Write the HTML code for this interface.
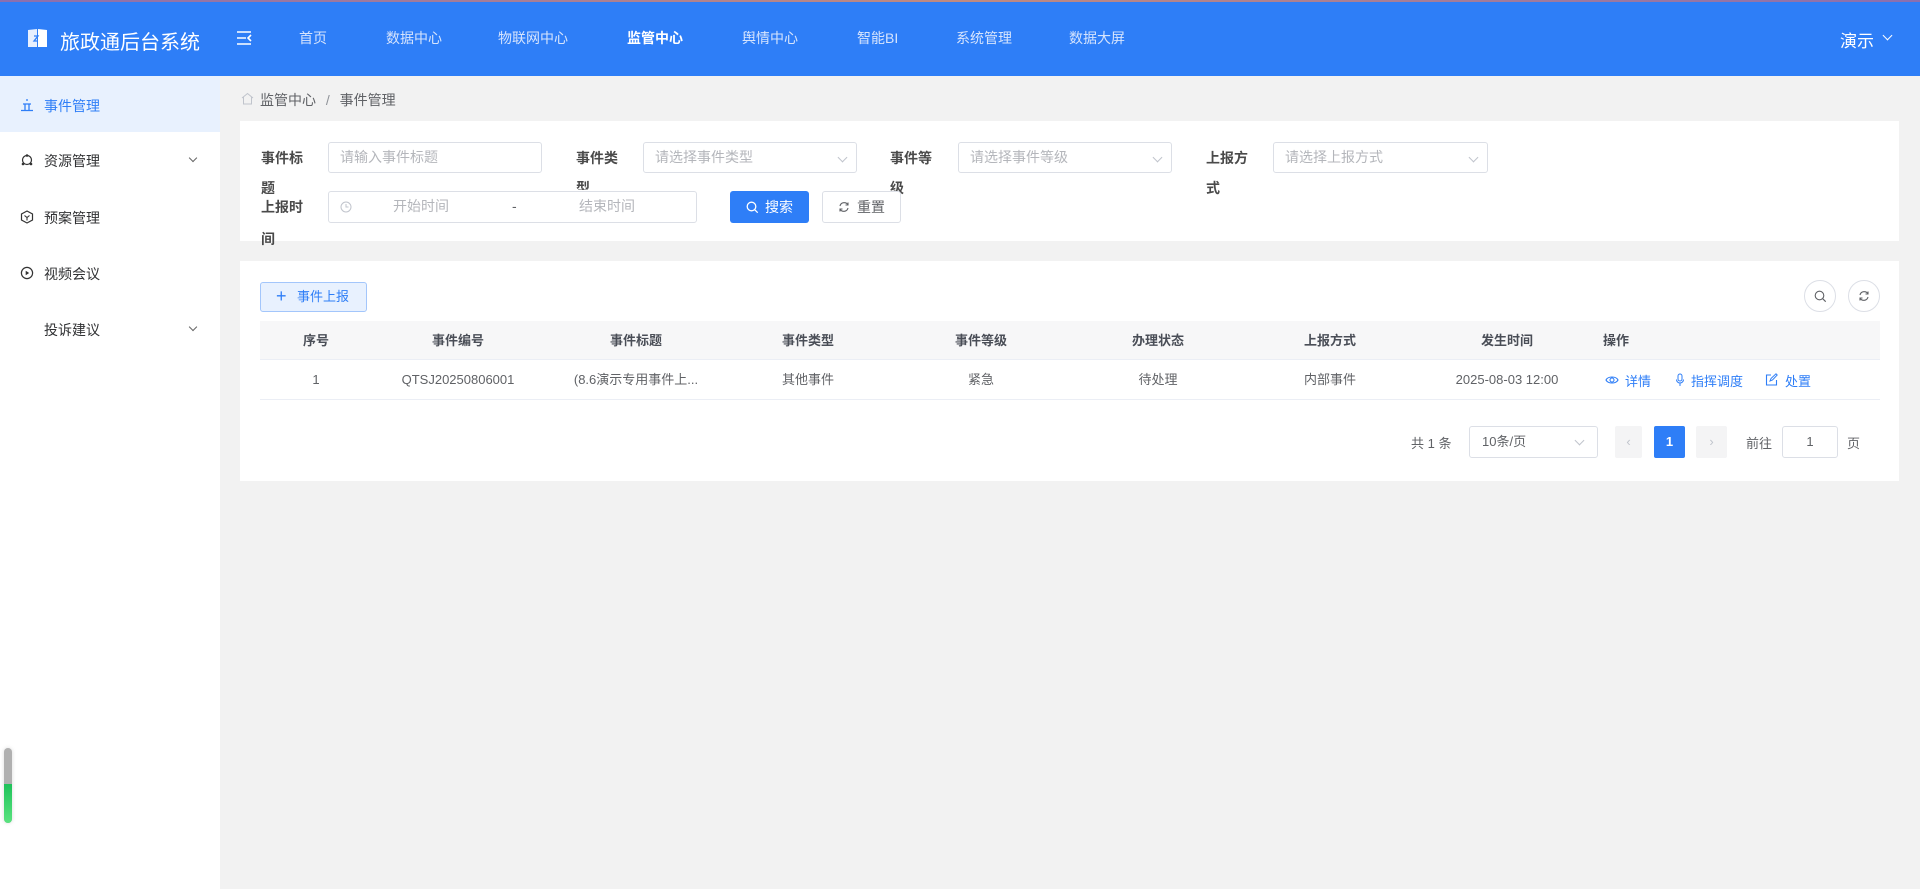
<!DOCTYPE html>
<html><head><meta charset="utf-8"><style>
*{margin:0;padding:0;box-sizing:border-box}
body{width:1920px;height:889px;overflow:hidden;background:#f2f2f2;font-family:"Liberation Sans","Noto Sans CJK SC",sans-serif;color:#606266;position:relative;font-size:14px}
.a{position:absolute;white-space:nowrap}
#hd{position:absolute;left:0;top:0;width:1920px;height:76px;background:#2e7ef7}
#topline{position:absolute;left:0;top:0;width:1920px;height:2px;background:linear-gradient(90deg,#8a6fb0,#c08a80,#8a6fb0)}
.nav{position:absolute;top:28px;font-size:14px;color:#d6e4fd}
#sb{position:absolute;left:0;top:76px;width:220px;height:813px;background:#fff}
.si{position:absolute;left:44px;font-size:14px;color:#303133}
.lab{position:absolute;font-size:14px;font-weight:bold;color:#4a4a4a;line-height:20px}
.inp{position:absolute;height:31px;border:1px solid #dcdfe6;border-radius:3px;background:#fff;font-size:14px;color:#b4b6bb;padding-left:11px;line-height:29px}
.chev{position:absolute;right:10px;top:11px;width:7px;height:7px;border-right:1px solid #c0c4cc;border-bottom:1px solid #c0c4cc;transform:rotate(45deg)}
.th{position:absolute;top:321px;height:39px;line-height:39px;text-align:center;font-weight:bold;color:#4a4e57;font-size:13px}
.td{position:absolute;top:360px;height:40px;line-height:40px;text-align:center;color:#606266;font-size:13px}
.lk{position:absolute;top:371px;color:#2e7ef7;font-size:13px}
</style></head><body>
<div id="hd"></div><div id="topline"></div>
<svg class="a" style="left:26px;top:26px" width="24" height="24" viewBox="0 0 24 24"><path d="M2 4 L11 3 L11 21 L2 21Z" fill="#e8f0fe"/><path d="M12 3 L21 4 L21 21 L12 21Z" fill="#fff"/><path d="M8 10h4l-4 5h4" stroke="#2e7ef7" stroke-width="1.3" fill="none"/></svg>
<div class="a" style="left:60px;top:26px;font-size:20px;color:#fff">旅政通后台系统</div>
<svg class="a" style="left:236px;top:31px" width="16" height="14" viewBox="0 0 16 14"><path d="M1 1h14M1 7h9M1 13h14M15 4l-3 3 3 3" stroke="#fff" stroke-width="1.6" fill="none"/></svg>
<div class="nav" style="left:299px">首页</div>
<div class="nav" style="left:386px">数据中心</div>
<div class="nav" style="left:498px">物联网中心</div>
<div class="nav" style="left:627px;color:#fff;font-weight:bold">监管中心</div>
<div class="nav" style="left:742px">舆情中心</div>
<div class="nav" style="left:857px">智能BI</div>
<div class="nav" style="left:956px">系统管理</div>
<div class="nav" style="left:1069px">数据大屏</div>
<div class="a" style="left:1840px;top:27px;font-size:17px;color:#fff">演示</div>
<div class="a" style="left:1884px;top:32px;width:7px;height:7px;border-right:1.5px solid #fff;border-bottom:1.5px solid #fff;transform:rotate(45deg)"></div>

<div id="sb"></div>
<div class="a" style="left:0;top:76px;width:220px;height:56px;background:#e8f1fe"></div>
<svg class="a" style="left:20px;top:98px" width="14" height="14" viewBox="0 0 14 14"><path d="M7 1v2M3 6h8M5 6v6M9 6v6M1 12.5h12" stroke="#2e7ef7" stroke-width="1.3" fill="none"/></svg>
<div class="si" style="top:96px;color:#2e7ef7">事件管理</div>
<svg class="a" style="left:20px;top:153px" width="14" height="14" viewBox="0 0 14 14"><circle cx="7" cy="7" r="4.5" stroke="#333" stroke-width="1.2" fill="none"/><circle cx="7" cy="2.5" r="1.3" fill="#333"/><circle cx="3" cy="11" r="1.3" fill="#333"/><circle cx="11" cy="11" r="1.3" fill="#333"/></svg>
<div class="si" style="top:151px">资源管理</div>
<div class="a" style="left:190px;top:155px;width:6px;height:6px;border-right:1px solid #666;border-bottom:1px solid #666;transform:rotate(45deg)"></div>
<svg class="a" style="left:20px;top:210px" width="14" height="14" viewBox="0 0 14 14"><path d="M7 1l5.5 3v6L7 13 1.5 10V4Z" stroke="#333" stroke-width="1.2" fill="none"/><path d="M4.5 5.5L7 7.5l2.5-2M7 7.5v3" stroke="#333" stroke-width="1.1" fill="none"/></svg>
<div class="si" style="top:208px">预案管理</div>
<svg class="a" style="left:20px;top:266px" width="14" height="14" viewBox="0 0 14 14"><circle cx="7" cy="7" r="5.6" stroke="#333" stroke-width="1.2" fill="none"/><path d="M5.7 4.8v4.4L9.2 7Z" fill="#333"/></svg>
<div class="si" style="top:264px">视频会议</div>
<div class="si" style="top:320px">投诉建议</div>
<div class="a" style="left:190px;top:324px;width:6px;height:6px;border-right:1px solid #666;border-bottom:1px solid #666;transform:rotate(45deg)"></div>
<div class="a" style="left:4px;top:748px;width:8px;height:75px;border-radius:4px;background:#b0b0b0;overflow:hidden;box-shadow:0 0 4px rgba(0,0,0,.15)"><div style="position:absolute;top:36px;left:0;width:8px;height:39px;background:linear-gradient(#1fc25a,#5ae37f)"></div></div>

<svg class="a" style="left:241px;top:92px" width="13" height="13" viewBox="0 0 13 13"><path d="M1 6L6.5 1.5 12 6M2.5 5v7h8V5" stroke="#c0c4cc" stroke-width="1" fill="none"/></svg>
<div class="a" style="left:260px;top:90px;font-size:14px;color:#606266">监管中心 <span style="margin:0 6px;color:#909399">/</span> 事件管理</div>

<div class="a" style="left:240px;top:121px;width:1659px;height:120px;background:#fff"></div>
<div class="lab" style="left:261px;top:148px">事件标</div><div class="lab" style="left:261px;top:178px">题</div>
<div class="inp" style="left:328px;top:142px;width:214px">请输入事件标题</div>
<div class="lab" style="left:576px;top:148px">事件类</div><div class="lab" style="left:576px;top:178px;height:12px;overflow:hidden">型</div>
<div class="inp" style="left:643px;top:142px;width:214px">请选择事件类型<i class="chev"></i></div>
<div class="lab" style="left:890px;top:148px">事件等</div><div class="lab" style="left:890px;top:178px">级</div>
<div class="inp" style="left:958px;top:142px;width:214px">请选择事件等级<i class="chev"></i></div>
<div class="lab" style="left:1206px;top:148px">上报方</div><div class="lab" style="left:1206px;top:178px">式</div>
<div class="inp" style="left:1273px;top:142px;width:215px">请选择上报方式<i class="chev"></i></div>
<div class="lab" style="left:261px;top:197px">上报时</div><div class="lab" style="left:261px;top:229px">间</div>
<div class="inp" style="left:328px;top:191px;width:369px;height:32px;padding:0"><svg style="position:absolute;left:11px;top:9px" width="12" height="12" viewBox="0 0 12 12"><circle cx="6" cy="6" r="5" stroke="#c0c4cc" fill="none"/><path d="M6 3v3h2.5" stroke="#c0c4cc" fill="none"/></svg><span style="position:absolute;left:64px">开始时间</span><span style="position:absolute;left:183px;color:#606266">-</span><span style="position:absolute;left:250px">结束时间</span></div>
<div class="a" style="left:730px;top:191px;width:79px;height:32px;background:#2e7ef7;border-radius:3px;color:#fff;font-size:14px;line-height:32px;padding-left:35px"><svg style="position:absolute;left:16px;top:10px" width="13" height="13" viewBox="0 0 13 13"><circle cx="5.5" cy="5.5" r="4.3" stroke="#fff" stroke-width="1.3" fill="none"/><path d="M8.7 8.7l3 3" stroke="#fff" stroke-width="1.3"/></svg>搜索</div>
<div class="a" style="left:822px;top:191px;width:79px;height:32px;border:1px solid #dcdfe6;background:#fff;border-radius:3px;color:#606266;font-size:14px;line-height:30px;padding-left:34px"><svg style="position:absolute;left:15px;top:9px" width="12" height="12" viewBox="0 0 12 12"><path d="M10 4A4.3 4.3 0 0 0 2 5M2 8a4.3 4.3 0 0 0 8-1M10 1.5V4H7.5M2 10.5V8h2.5" stroke="#606266" stroke-width="1.1" fill="none"/></svg>重置</div>

<div class="a" style="left:240px;top:261px;width:1659px;height:220px;background:#fff"></div>
<div class="a" style="left:260px;top:282px;width:107px;height:30px;background:#e8f1fe;border:1px solid #a3c6fb;border-radius:3px;color:#2e7ef7;font-size:13px;line-height:28px;padding-left:36px"><span style="position:absolute;left:15px;top:-1px;font-size:18px">+</span>事件上报</div>
<div class="a" style="left:1804px;top:280px;width:32px;height:32px;border:1px solid #dcdfe6;border-radius:50%"><svg style="position:absolute;left:9px;top:9px" width="13" height="13" viewBox="0 0 13 13"><circle cx="5.5" cy="5.5" r="4.3" stroke="#606266" stroke-width="1.1" fill="none"/><path d="M8.7 8.7l3 3" stroke="#606266" stroke-width="1.1"/></svg></div>
<div class="a" style="left:1848px;top:280px;width:32px;height:32px;border:1px solid #dcdfe6;border-radius:50%"><svg style="position:absolute;left:9px;top:9px" width="12" height="12" viewBox="0 0 12 12"><path d="M10 4A4.3 4.3 0 0 0 2 5M2 8a4.3 4.3 0 0 0 8-1M10 1.5V4H7.5M2 10.5V8h2.5" stroke="#606266" stroke-width="1.1" fill="none"/></svg></div>

<div class="a" style="left:260px;top:321px;width:1620px;height:39px;background:#f7f7f8;border-bottom:1px solid #ebeef5"></div>
<div class="a" style="left:260px;top:399px;width:1620px;height:1px;background:#ebeef5"></div>
<div class="th" style="left:260px;width:112px">序号</div>
<div class="th" style="left:372px;width:172px">事件编号</div>
<div class="th" style="left:544px;width:184px">事件标题</div>
<div class="th" style="left:728px;width:160px">事件类型</div>
<div class="th" style="left:888px;width:186px">事件等级</div>
<div class="th" style="left:1074px;width:168px">办理状态</div>
<div class="th" style="left:1242px;width:176px">上报方式</div>
<div class="th" style="left:1418px;width:178px">发生时间</div>
<div class="th" style="left:1603px;text-align:left">操作</div>
<div class="td" style="left:260px;width:112px">1</div>
<div class="td" style="left:372px;width:172px">QTSJ20250806001</div>
<div class="td" style="left:544px;width:184px">(8.6演示专用事件上...</div>
<div class="td" style="left:728px;width:160px">其他事件</div>
<div class="td" style="left:888px;width:186px">紧急</div>
<div class="td" style="left:1074px;width:168px">待处理</div>
<div class="td" style="left:1242px;width:176px">内部事件</div>
<div class="td" style="left:1418px;width:178px">2025-08-03 12:00</div>
<svg class="a" style="left:1605px;top:374px" width="14" height="12" viewBox="0 0 14 12"><path d="M1 6C3 2 11 2 13 6 11 10 3 10 1 6Z" stroke="#2e7ef7" stroke-width="1.1" fill="none"/><circle cx="7" cy="6" r="2" stroke="#2e7ef7" stroke-width="1.1" fill="none"/></svg>
<div class="lk" style="left:1625px">详情</div>
<svg class="a" style="left:1675px;top:373px" width="10" height="14" viewBox="0 0 10 14"><rect x="3" y="1" width="4" height="7" rx="2" stroke="#2e7ef7" fill="none"/><path d="M1.5 6.5a3.5 3.5 0 0 0 7 0M5 10v3" stroke="#2e7ef7" fill="none"/></svg>
<div class="lk" style="left:1691px">指挥调度</div>
<svg class="a" style="left:1765px;top:373px" width="13" height="13" viewBox="0 0 13 13"><path d="M6 2H1.5v10h10V7" stroke="#2e7ef7" stroke-width="1.1" fill="none"/><path d="M5 8l1-2.5L11 0.8l1.2 1.2L7.5 7Z" stroke="#2e7ef7" stroke-width="1" fill="none"/></svg>
<div class="lk" style="left:1785px">处置</div>

<div class="a" style="left:1411px;top:433px;font-size:13px;color:#606266">共 1 条</div>
<div class="a" style="left:1469px;top:426px;width:129px;height:32px;border:1px solid #dcdfe6;border-radius:3px;font-size:13px;line-height:30px;padding-left:12px;color:#606266">10条/页<i class="chev" style="top:10px;right:14px"></i></div>
<div class="a" style="left:1615px;top:426px;width:27px;height:32px;background:#f4f4f5;border-radius:2px;color:#c0c4cc;text-align:center;line-height:32px;font-size:13px">‹</div>
<div class="a" style="left:1654px;top:426px;width:31px;height:32px;background:#2e7ef7;border-radius:2px;color:#fff;text-align:center;line-height:32px;font-size:13px;font-weight:bold">1</div>
<div class="a" style="left:1696px;top:426px;width:31px;height:32px;background:#f4f4f5;border-radius:2px;color:#c0c4cc;text-align:center;line-height:32px;font-size:13px">›</div>
<div class="a" style="left:1746px;top:433px;font-size:13px">前往</div>
<div class="a" style="left:1782px;top:426px;width:56px;height:32px;border:1px solid #dcdfe6;border-radius:3px;text-align:center;line-height:30px;font-size:13px">1</div>
<div class="a" style="left:1847px;top:433px;font-size:13px">页</div>
</body></html>
